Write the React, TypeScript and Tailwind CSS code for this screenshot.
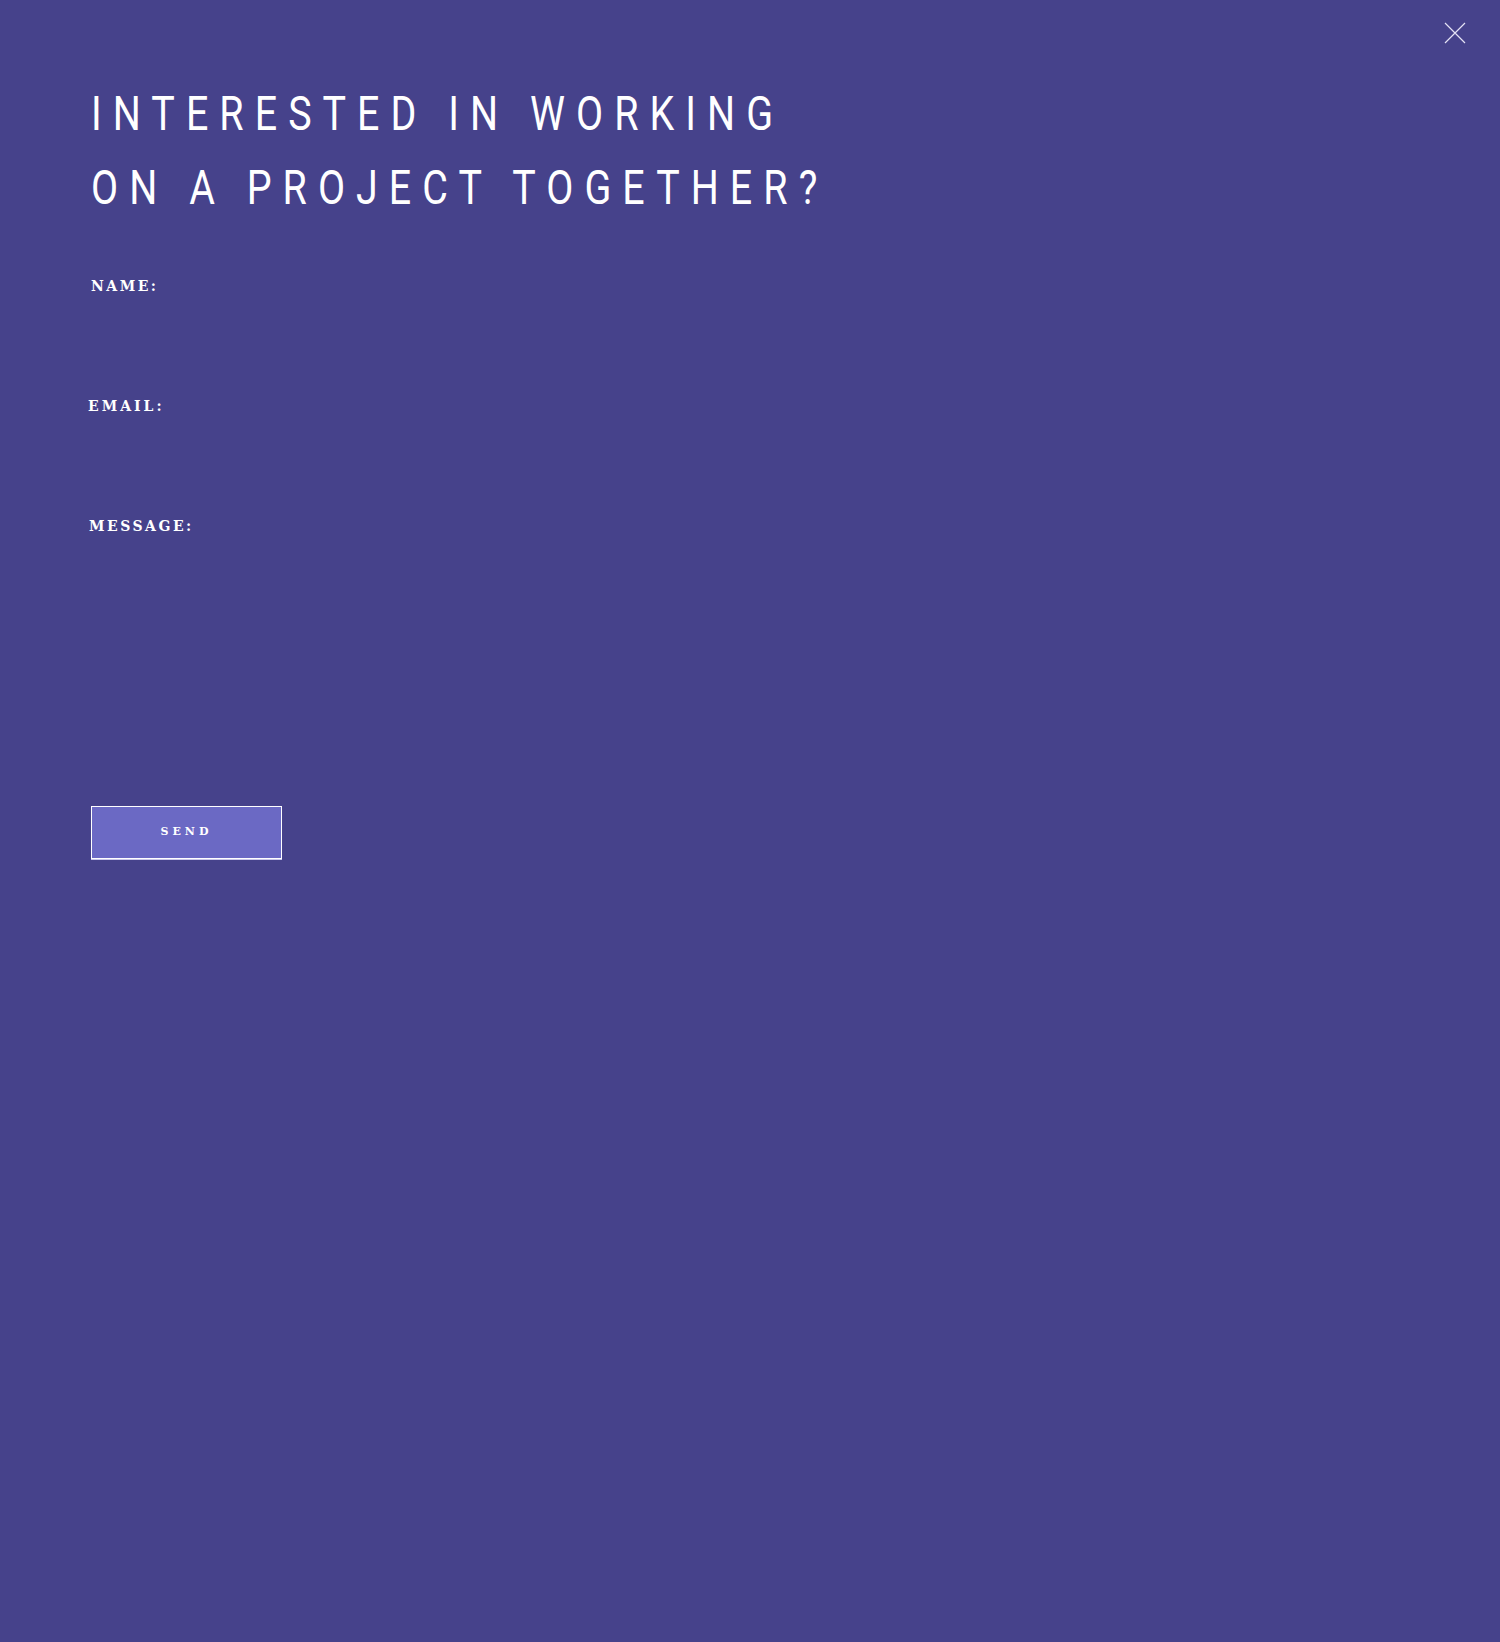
export default function App() {
  return (
    <div className="relative min-h-[1642px] w-full bg-[#46428b] text-white">
      <button className="absolute right-[34px] top-[22px] h-[22px] w-[22px]" aria-label="Close">
        <svg viewBox="0 0 22 22" className="h-[22px] w-[22px]" fill="none" stroke="#e4e2f5" strokeWidth="1.2">
          <path d="M1 1 L21 21 M21 1 L1 21" />
        </svg>
      </button>

      <div className="pl-[91px] pt-[77px]">
        {/* condensed look: Roboto squeezed, then spaced out */}
        <h1 className="origin-left scale-x-[0.82] whitespace-nowrap font-['Roboto',sans-serif] text-[48px] font-normal leading-[74px] tracking-[13.5px]">
          INTERESTED IN WORKING
          <br />
          ON A PROJECT TOGETHER?
        </h1>

        <form className="mt-[51px] flex flex-col font-['DejaVu_Serif',serif] font-bold">
          <label className="text-[14px] leading-[20px] tracking-[2.5px]">NAME:</label>
          <input className="mb-[10px] mt-[10px] h-[80px] w-[600px] bg-transparent outline-none" />

          <label className="-ml-[3px] text-[14px] leading-[20px] tracking-[3px]">EMAIL:</label>
          <input className="mb-[10px] mt-[10px] h-[80px] w-[600px] bg-transparent outline-none" />

          <label className="-ml-[2px] text-[14px] leading-[20px] tracking-[2.5px]">MESSAGE:</label>
          <textarea className="mt-[10px] h-[250px] w-[600px] resize-none bg-transparent outline-none" />

          <button
            type="button"
            className="mt-[10px] h-[53px] w-[191px] border border-white bg-[#6b69c4] text-[11px] tracking-[4px] shadow-[0_1px_0_#c9c7ec]"
          >
            SEND
          </button>
        </form>
      </div>
    </div>
  )
}
